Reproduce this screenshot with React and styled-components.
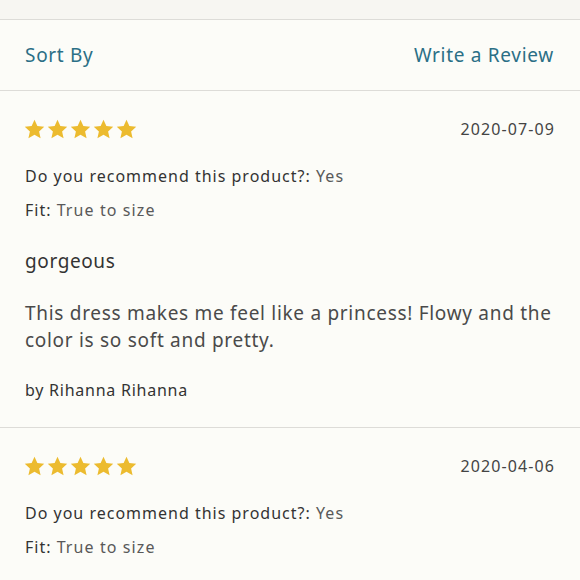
import React from "react";
import styled, { createGlobalStyle } from "styled-components";

const GlobalStyle = createGlobalStyle`
	body {
		margin: 0;
		background-color: #fcfcf8;
		font-family: "Noto Sans", "Open Sans", sans-serif;
	}
`;

const reviews = [
	{
		id: 1,
		rating: 5,
		date: "2020-07-09",
		recommend: "Yes",
		fit: "True to size",
		title: "gorgeous",
		body: "This dress makes me feel like a princess! Flowy and the color is so soft and pretty.",
		author: "Rihanna Rihanna",
	},
	{
		id: 2,
		rating: 5,
		date: "2020-04-06",
		recommend: "Yes",
		fit: "True to size",
	},
];

function Stars({ count }) {
	return (
		<StarRow>
			{Array.from({ length: count }).map((_, i) => (
				<svg key={i} width="21" height="20" viewBox="0 0 24 23">
					<path
						d="M12 0.8l3.3 7.3 7.9.8-5.9 5.4 1.7 7.8L12 18.1l-7 4 1.7-7.8L.8 8.9l7.9-.8z"
						fill="#ecbb2f"
					/>
				</svg>
			))}
		</StarRow>
	);
}

function Review({ review }) {
	return (
		<ReviewCard>
			<TopLine>
				<Stars count={review.rating} />
				<DateText>{review.date}</DateText>
			</TopLine>
			<Attr>
				Do you recommend this product?: <Value>{review.recommend}</Value>
			</Attr>
			<Attr>
				Fit: <Value>{review.fit}</Value>
			</Attr>
			{review.title && <Title>{review.title}</Title>}
			{review.body && <Body>{review.body}</Body>}
			{review.author && <Author>by {review.author}</Author>}
		</ReviewCard>
	);
}

export default function App() {
	return (
		<>
			<GlobalStyle />
			<Page>
				<TopBand />
				<Header>
					<LinkText>Sort By</LinkText>
					<LinkText>Write a Review</LinkText>
				</Header>
				{reviews.map((r) => (
					<Review key={r.id} review={r} />
				))}
			</Page>
		</>
	);
}

const Page = styled.div`
	display: flex;
	flex-direction: column;
	height: 580px;
	overflow: hidden;
`;

const TopBand = styled.div`
	height: 19px;
	background-color: #f7f6f2;
	border-bottom: 1px solid #dddcd8;
	flex-shrink: 0;
`;

const Header = styled.div`
	display: flex;
	justify-content: space-between;
	align-items: center;
	height: 70px;
	padding: 0 26px 0 25px;
	border-bottom: 1px solid #dddcd8;
	flex-shrink: 0;
`;

const LinkText = styled.span`
	color: #2b6f86;
	font-size: 19px;
	letter-spacing: 0.7px;
	cursor: pointer;
`;

const ReviewCard = styled.div`
	display: flex;
	flex-direction: column;
	padding: 26px 26px 26px 25px;
	border-bottom: 1px solid #dddcd8;
	flex-shrink: 0;
`;

const TopLine = styled.div`
	display: flex;
	justify-content: space-between;
	align-items: center;
	height: 24px;
	margin-bottom: 24px;
`;

const StarRow = styled.div`
	display: flex;
	gap: 2px;
	margin-left: -1px;
`;

const DateText = styled.span`
	font-size: 16px;
	color: #444;
	letter-spacing: 1.1px;
	margin-right: -1px;
`;

const Attr = styled.div`
	font-size: 16px;
	line-height: 22px;
	color: #333;
	letter-spacing: 1px;
	margin-bottom: 12px;
`;

const Value = styled.span`
	color: #595959;
	letter-spacing: 1.1px;
`;

const Title = styled.div`
	font-size: 19px;
	line-height: 26px;
	color: #333;
	letter-spacing: 0.6px;
	margin-top: 15px;
`;

const Body = styled.div`
	font-size: 19px;
	line-height: 27px;
	color: #4a4a4a;
	letter-spacing: 0.7px;
	margin-top: 26px;
`;

const Author = styled.div`
	font-size: 16px;
	line-height: 22px;
	color: #333;
	letter-spacing: 0.75px;
	margin-top: 25px;
`;
